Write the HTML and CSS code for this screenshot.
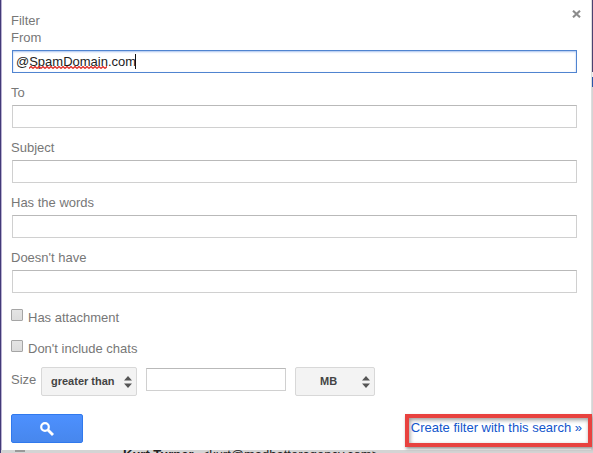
FILE: index.html
```html
<!DOCTYPE html>
<html lang="en">
<head>
<meta charset="utf-8">
<title>Filter</title>
<link rel="stylesheet" href="styles.css">
</head>
<body>
<main class="page">
  <form class="dialog">
    <button class="close" type="button" aria-label="Close">
      <svg width="9" height="8" viewBox="0 0 9 8"><path d="M1 .7l7 6.6M8 .7l-7 6.6" stroke="#8c8c8c" stroke-width="2.1"/></svg>
    </button>
    <h1 class="title">Filter</h1>
    <div class="field">
      <label for="from">From</label>
      <div class="entry">
        <input class="text active" id="from" type="text" value="@SpamDomain.com" spellcheck="false">
        <svg class="spelling" width="78" height="3" aria-hidden="true">
          <defs><pattern id="wave" width="4" height="3" patternUnits="userSpaceOnUse"><path d="M0 2.5L2 .5L4 2.5" fill="none" stroke="#e02b24" stroke-width="1.3"/></pattern></defs>
          <rect width="78" height="3" fill="url(#wave)"/>
        </svg>
        <span class="caret"></span>
      </div>
    </div>
    <div class="field"><label for="to">To</label><input class="text" id="to" type="text"></div>
    <div class="field"><label for="subject">Subject</label><input class="text" id="subject" type="text"></div>
    <div class="field"><label for="has">Has the words</label><input class="text" id="has" type="text"></div>
    <div class="field"><label for="not">Doesn't have</label><input class="text" id="not" type="text"></div>
    <div class="check"><input type="checkbox" id="attachment"><label for="attachment">Has attachment</label></div>
    <div class="check"><input type="checkbox" id="chats"><label for="chats">Don't include chats</label></div>
    <div class="size">
      <label for="amount">Size</label>
      <div class="picker picker-wide">
        <select aria-label="Comparison"><option>greater than</option><option>less than</option></select>
        <svg class="arrows" width="8" height="12" viewBox="0 0 8 12"><path d="M0 4.5L4 0l4 4.5zM0 7.5h8L4 12z" fill="#555"/></svg>
      </div>
      <input class="text amount" id="amount" type="text">
      <div class="picker picker-unit">
        <select aria-label="Unit"><option>MB</option><option>KB</option><option>Bytes</option></select>
        <svg class="arrows" width="8" height="12" viewBox="0 0 8 12"><path d="M0 4.5L4 0l4 4.5zM0 7.5h8L4 12z" fill="#555"/></svg>
      </div>
    </div>
    <div class="actions">
      <button class="search" type="submit" aria-label="Search">
        <svg width="14" height="14" viewBox="0 0 14 14" fill="none" stroke="#fff"><circle cx="5" cy="5" r="3.8" stroke-width="2.2"/><path d="M8 8l5 5" stroke-width="2.8"/></svg>
      </button>
      <div class="highlight"><a href="#create">Create filter with this search »</a></div>
    </div>
  </form>
  <div class="mail"><span class="mail-box"></span><b>Kurt Turner</b><span>&lt;kurt@madhatteragency.com&gt;</span></div>
</main>
</body>
</html>
```
FILE: styles.css
```css
* { box-sizing: border-box; }
body {
  margin: 0;
  font: 13px/17px "Liberation Sans", Arial, sans-serif;
  color: #777;
  background: linear-gradient(#4b4270 72px, #eee 72px 77px, #2a56a8 77px 87px, #d4d4d4 87px);
}
.page {
  height: 100vh;
  overflow: hidden;
  border-left: 1px solid #433a78;
}
.dialog {
  position: relative;
  margin-right: 1px;
  padding: 12px 0 3px 9px;
  background: #fff;
  border-left: 1px solid #b9b1d2;
  border-right: 1px solid #ddd;
}
.close {
  position: absolute;
  top: 10px;
  right: 10px;
  display: flex;
  padding: 0;
  border: 0;
  background: none;
}
.title { margin: 0; font-size: 13px; font-weight: normal; }
.field {
  display: flex;
  flex-direction: column;
  gap: 4px;
  margin: 0 14px 11px 0;
}
.entry { position: relative; display: flex; }
.text {
  height: 23px;
  padding: 0 3px;
  border: 1px solid #d0d0d0;
  border-top-color: #b9b9b9;
  border-radius: 0;
  background: #fff;
  color: #222;
  font: inherit;
  outline: 0;
}
.field .text { flex: 1 0 auto; margin: 0 0 0 1px; }
.active {
  border-color: #5084d0;
  box-shadow: inset 0 1px 2px #a9c3ee;
}
.spelling { position: absolute; left: 18px; top: 16px; }
.caret { position: absolute; left: 124px; top: 4px; width: 1px; height: 15px; background: #111; }
.check {
  display: flex;
  align-items: flex-start;
  gap: 5px;
  height: 17px;
  margin-bottom: 14px;
}
.field + .check { margin-top: 16px; }
.check input {
  appearance: none;
  width: 12px;
  height: 12px;
  margin: 0;
  border: 1px solid #a5a5a5;
  border-radius: 1px;
  background: linear-gradient(#e4e4e4, #dcdcdc);
}
.size { display: flex; align-items: flex-start; margin-top: -4px; }
.size > label { width: 30px; padding-top: 4px; }
.picker { position: relative; }
.picker-wide { width: 96px; }
.picker-unit { width: 80px; }
.picker select {
  appearance: none;
  width: 100%;
  height: 29px;
  padding: 0 9px;
  border: 1px solid #d8d8d8;
  border-radius: 2px;
  background: #f3f3f3;
  color: #444;
  font: bold 11px/17px "Liberation Sans", Arial, sans-serif;
}
.picker-unit select { padding-left: 24px; }
.arrows { position: absolute; right: 5px; top: 9px; pointer-events: none; }
.amount { width: 140px; margin: 1px 9px 0; }
.actions {
  display: flex;
  justify-content: space-between;
  align-items: flex-start;
  margin-top: 18px;
}
.search {
  display: flex;
  align-items: center;
  justify-content: center;
  width: 72px;
  height: 29px;
  padding: 0;
  border: 1px solid #3079ed;
  border-radius: 2px;
  background: linear-gradient(#4d90fe, #4787ed);
}
.highlight {
  margin-right: -1px;
  padding: 1px 6px 7px 2px;
  border: 4px solid #e8423f;
  box-shadow: 1px 2px 3px #999, inset 1px 2px 4px #999;
}
.highlight a { color: #15c; text-decoration: none; }
.mail {
  display: flex;
  gap: 8px;
  margin-top: -4px;
  padding-left: 14px;
  color: #222;
  background: #d4d4d4;
}
.mail-box { width: 10px; height: 6px; margin-right: 90px; background: #999; }
```
